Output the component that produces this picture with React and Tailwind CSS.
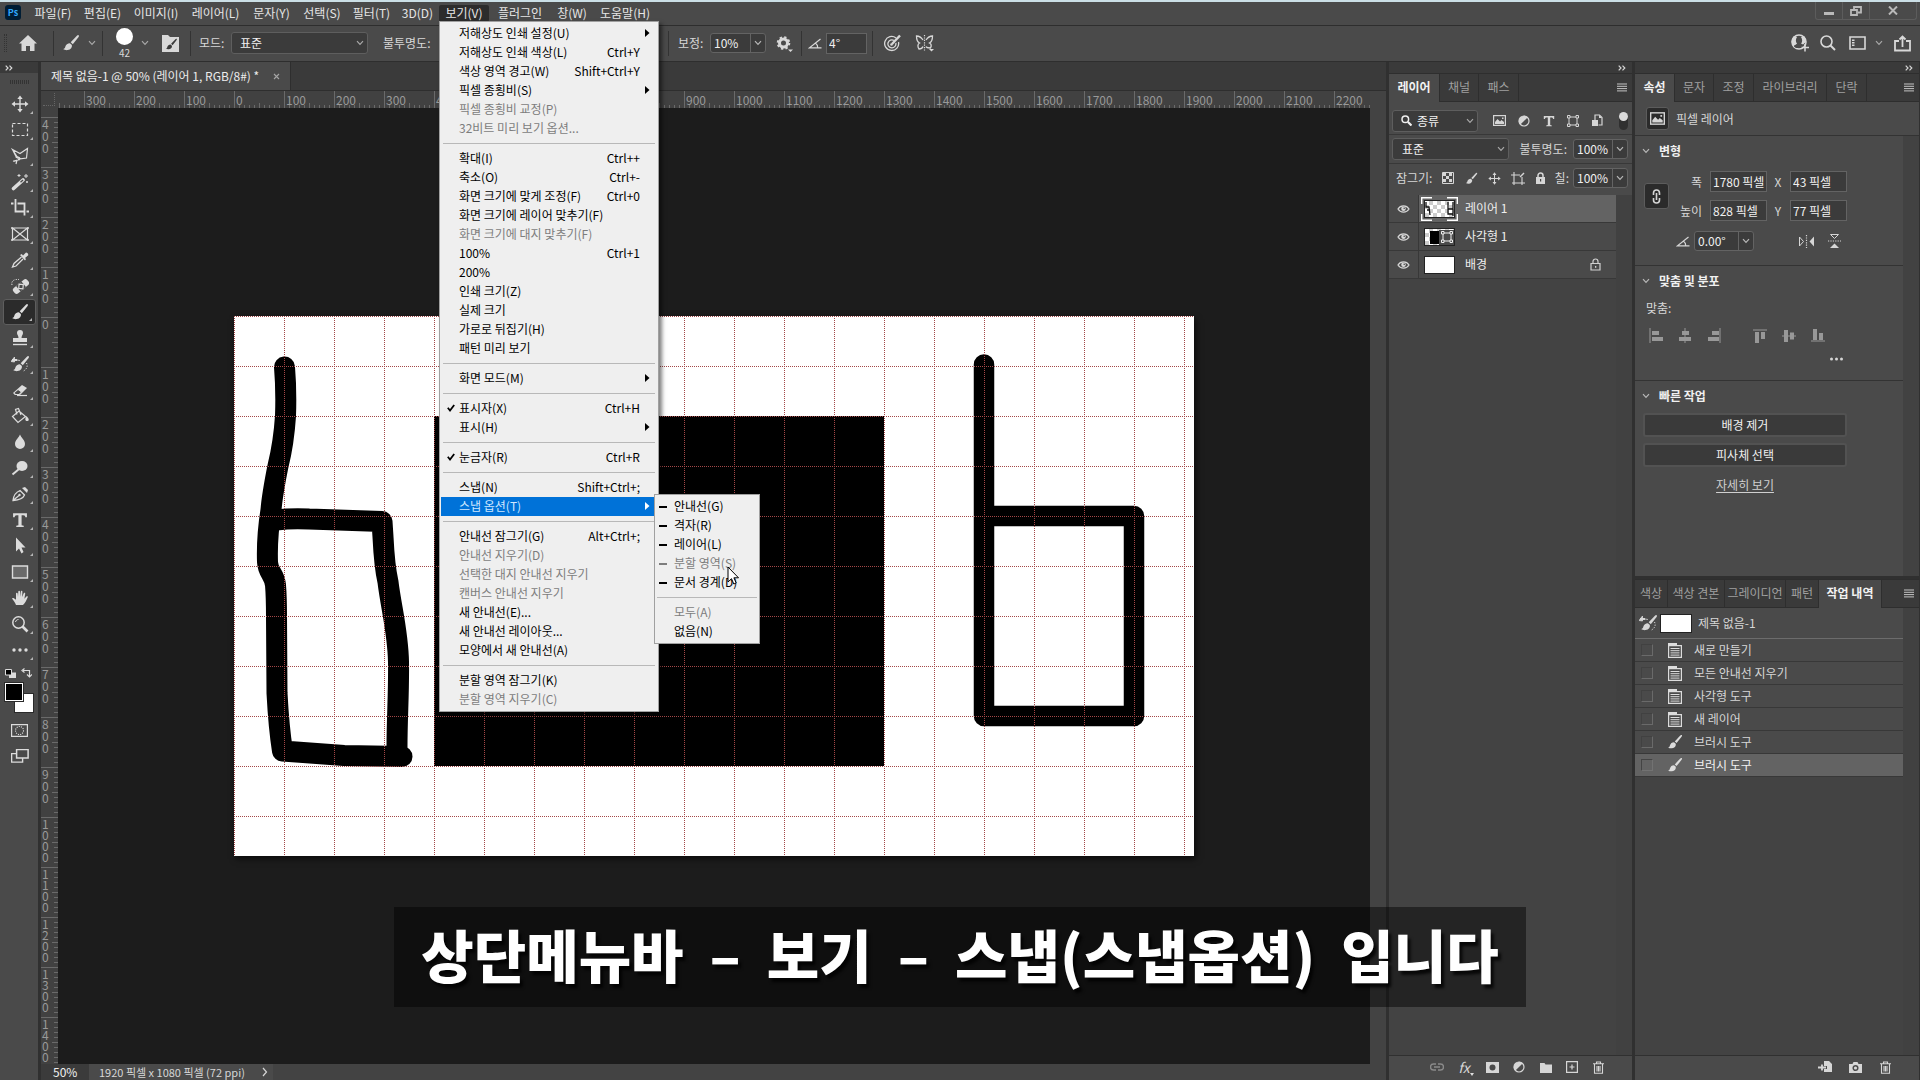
import React from "react";

const ui = "font-['Noto_Sans_CJK_KR','Noto_Sans',sans-serif]";

/* ---------- icons ---------- */

function Svg({ w = 18, h = 18, box, className = "", children }) {
  return (
    <svg
      width={w}
      height={h}
      viewBox={box || `0 0 ${w} ${h}`}
      fill="none"
      stroke="currentColor"
      strokeWidth="1.4"
      className={"shrink-0 " + className}
      aria-hidden="true"
    >
      {children}
    </svg>
  );
}

const Chevron = ({ className = "" }) => (
  <Svg w={8} h={6} className={className}>
    <path d="M1 1.2 4 4.4 7 1.2" strokeWidth="1.2" />
  </Svg>
);

const brushPath = (
  <g fill="currentColor" stroke="none">
    <path d="M16.6 1.2c.6.5.3 1.2-.2 2l-5.6 7-2.1-1.9 6.2-6.5c.6-.6 1.2-1 1.7-.6z" />
    <path d="M7.9 9.2l2 1.9c.4 2.3-1 4.7-4.2 5-1.7.2-3.4-.2-4.5-1 1.3-.2 1.7-.9 2.1-2.3.6-2.2 2.3-3.6 4.6-3.6z" />
  </g>
);
const Brush = ({ s = 18, className = "" }) => (
  <Svg w={s} h={s} box="0 0 18 18" className={className}>{brushPath}</Svg>
);
const Move = ({ s = 18 }) => (
  <Svg w={s} h={s} box="0 0 18 18">
    <path d="M9 2v14M2 9h14" />
    <path d="M9 .5 6.3 4h5.4zM9 17.5 6.3 14h5.4zM.5 9 4 6.3v5.4zM17.5 9 14 6.3v5.4z" fill="currentColor" stroke="none" />
  </Svg>
);
const HistoryBrush = () => (
  <Svg>
    <g transform="translate(1 0)">{brushPath}</g>
    <path d="M1 5h5" strokeWidth="2" />
    <path d="M6 5 9 5.5M0 6.5 3.5 2v5z" fill="currentColor" strokeWidth=".8" />
    <path d="M15.500 8c1.500 3 .5 6-3 8" strokeDasharray="1.2 1.5" strokeWidth="1" />
  </Svg>
);
const Angle = () => (
  <Svg w={14} h={11}>
    <path d="M12.5 1 1.5 9.8h12M7.500 5.200c1.600 1 2.200 2.500 2.200 4.500" strokeWidth="1.2" />
  </Svg>
);
const Trash = ({ s = 13 }) => (
  <Svg w={s} h={s} box="0 0 13 13">
    <path d="M1 2.700h11M4.500 2.500V1h4v1.500M2.500 3v9.300h8V3M5 5v5.500M6.500 5v5.500M8 5v5.500" strokeWidth="1.1" />
  </Svg>
);
const Menu3 = () => (
  <Svg w={10} h={9}><path d="M0 1h10M0 3.300h10M0 5.600h10M0 7.900h10" strokeWidth="1" /></Svg>
);
const Expand = () => (
  <Svg w={8} h={6}><path d="M.7.7 3 3 .7 5.3M4.5.7 6.800 3 4.500 5.300" strokeWidth="1.2" /></Svg>
);
const Picture = ({ w = 13, h = 11 }) => (
  <Svg w={w} h={h} box="0 0 13 11">
    <rect x=".6" y=".6" width="11.8" height="9.8" strokeWidth="1.2" />
    <path d="M2 9V7l2.500-3L7 6.500 8.500 5 11 7v2z" fill="currentColor" stroke="none" />
    <rect x="9" y="2.5" width="1.5" height="1.5" fill="currentColor" stroke="none" />
  </Svg>
);
const HalfCircle = () => (
  <Svg w={12} h={12}>
    <circle cx="6" cy="6" r="5" strokeWidth="1.2" />
    <path d="M9.800 2.200A5.400 5.400 0 0 0 2.200 9.800z" fill="currentColor" stroke="none" />
  </Svg>
);
const Transform = () => (
  <Svg w={12} h={12}>
    <path d="M2 2h8v8H2z" strokeWidth="1" />
    <path d="M.5.5h2.500v2.500H.5zM9 .5h2.500v2.500H9zM.5 9h2.500v2.500H.5zM9 9h2.500v2.500H9z" fill="#4a4a4a" strokeWidth="1" />
  </Svg>
);
const TypeT = ({ s = 12 }) => (
  <Svg w={s} h={s} box="0 0 12 12">
    <path d="M.8 1h10.400v3H10c0-1-.5-1.500-1.500-1.500H7.200V10l1.600.4v.8H3.200v-.8l1.600-.4V2.500H3.500C2.500 2.500 2 3 2 4H.8z" fill="currentColor" stroke="none" />
  </Svg>
);
const PadLock = () => (
  <Svg w={11} h={12}>
    <rect x="1" y="5" width="9" height="7" fill="currentColor" stroke="none" />
    <path d="M3 5V3.500a2.500 2.500 0 0 1 5 0V5" strokeWidth="1.5" />
    <rect x="5" y="7" width="1.2" height="2.5" fill="#444" stroke="none" />
  </Svg>
);
const Eye = () => (
  <Svg w={13} h={10}>
    <path d="M1 5c2.500-4.200 8.500-4.200 11 0-2.500 4.200-8.500 4.200-11 0z" strokeWidth="1.3" />
    <circle cx="6.5" cy="4.8" r="2.3" fill="currentColor" stroke="none" />
    <circle cx="7.2" cy="4.2" r=".8" fill="#4a4a4a" stroke="none" />
  </Svg>
);
const Doc = () => (
  <Svg w={14} h={15}>
    <path d="M0 0h9v3H0z" fill="currentColor" stroke="none" />
    <path d="M.6 2.600h12.800v11.800H.6z" strokeWidth="1.2" />
    <path d="M2.500 5.500h9M2.500 7.700h9M2.500 9.900h9M2.500 12.100h9" strokeWidth="1" />
  </Svg>
);

const toolIcons = [
  ["이동 도구", <Move />],
  ["사각형 선택 윤곽 도구", <Svg><path d="M1.500 2.500h15v12h-15z" strokeDasharray="3 2" strokeWidth="1.2" /></Svg>],
  ["올가미 도구", <Svg><path d="M1.500 2.500 9 6.500 16.500 1.500l-1 9.500-8 1z M1.500 2.500l4 8M5 11a2 1.500 0 1 1 2 2c-2 0-3 1.500-5 1M6 13l-1 4" strokeWidth="1.2" /></Svg>],
  ["마술봉 도구", <Svg><path d="M2.500 15.500 12 7" strokeWidth="3.6" strokeLinecap="round" /><path d="M9.500 9.200 12 7" stroke="#4a4a4a" strokeWidth="1.3" /><path d="M8 1v3M6.500 2.500h3M15 1v4M13 3h4M16 8v2M15 9h2" strokeWidth="1" /></Svg>],
  ["자르기 도구", <Svg><path d="M4.500 0v12.500h9M0 4.500h2.500M6.500 4.500h7v12M15.500 12.500H18" strokeWidth="1.8" /></Svg>],
  ["프레임 도구", <Svg><path d="M1.500 3h15v12h-15zM1.500 3l15 12M16.500 3l-15 12" strokeWidth="1.2" /><path d="M0 3h2M0 15h2M16 3h2M16 15h2" strokeWidth="1.5" /></Svg>],
  ["스포이드 도구", <Svg><path d="M10.500 6 3 12.500l-1.500 3.500 3.500-1L12 8" strokeWidth="1.3" /><path d="M9 4l5 5.500 1-1.500-1-1 3-2.500c.8-1-.2-3-2-3L12 4.500 10.800 3z" fill="currentColor" stroke="none" /></Svg>],
  ["복구 브러시 도구", <Svg><g transform="rotate(-40 10 9.5)"><rect x="1" y="6" width="18" height="7" rx="2.5" fill="currentColor" stroke="none" /><rect x="6.500" y="6" width="7" height="7" fill="#4a4a4a" stroke="none" /><path d="M7 9.500 10 6.500l3 3-3 3z" strokeWidth="1.2" /></g><path d="M1 8C0 4 3 2 8 2.500" strokeDasharray="1.2 1.3" strokeWidth="1" /></Svg>],
  ["브러시 도구", <Brush />],
  ["복제 도장 도구", <Svg><path d="M6 4a3 3 0 1 1 6 0c0 2-1.500 2.500-1.500 5H16v4H2V9h5.500C7.500 6.500 6 6 6 4z" fill="currentColor" stroke="none" /><path d="M2 15.500h14" /></Svg>],
  ["작업 내역 브러시 도구", <HistoryBrush />],
  ["지우개 도구", <Svg><path d="M2 12 11 4l5 3-7 7H4z" fill="currentColor" stroke="none" /><path d="M3.500 11.500 7 8.500l3.500 2.500-2.500 2.500H4z" fill="#4a4a4a" stroke="currentColor" strokeWidth="1" /><path d="M6 14.500h10" strokeWidth="1.2" /></Svg>],
  ["페인트 통 도구", <Svg><path d="M1.500 9.500 8 4l6.500 5.500L7 15.500zM6 7.500 4.500 2.500l3-1L10 8" strokeWidth="1.2" /><path d="M15 9c4 3 3 5 1 5s-2-2-1-5z" fill="currentColor" stroke="none" /></Svg>],
  ["흐림 효과 도구", <Svg><path d="M9 1.500c1 3 5 5.500 5 9.500a5 5 0 0 1-10 0c0-4 4-6.500 5-9.500z" fill="currentColor" stroke="none" /></Svg>],
  ["닷지 도구", <Svg><ellipse cx="11" cy="7" rx="5.5" ry="5" fill="currentColor" stroke="none" /><path d="M8 10 1.500 15.500" strokeWidth="2" /></Svg>],
  ["펜 도구", <Svg><path d="M2 15.500C2.500 11 4 7.500 9 5.500l4.500 4.500c-1.500 4-5.500 5-11.500 5.500zL8 10.500" strokeWidth="1.3" /><path d="m11 3 5 5 1-3-3-3z" fill="currentColor" stroke="none" /><circle cx="8.500" cy="10" r="1.2" fill="currentColor" stroke="none" /></Svg>],
  ["수평 문자 도구", <TypeT s={16} />],
  ["패스 선택 도구", <Svg><path d="M5 .5 14.500 10.500H10.500l2 4.500-2 1.500-2.500-5L5 14.500z" fill="currentColor" stroke="none" /></Svg>],
  ["사각형 도구", <Svg><path d="M1.500 3h15v12h-15z" fill="#6a6a6a" /></Svg>],
  ["손 도구", <Svg><path d="M5 16C4 13 2 11 1 9.500c.5-1 2-.5 4 1.200V4.500c0-1 1.500-1 1.700 0L7 8l.3-5.500c0-1 1.700-1 1.700 0V8l.8-5.500c.2-1 1.700-.8 1.600.2L11.200 8l1.500-3.800c.4-.9 1.700-.5 1.500.5l-.8 5 2-2.200c.9-.8 1.800-.1 1.300.8-1.500 3-2.200 5.500-4.700 7.700z" fill="currentColor" stroke="none" /></Svg>],
  ["돋보기 도구", <Svg><circle cx="7.500" cy="7.500" r="5.7" strokeWidth="1.5" /><path d="m11.500 11.500 5 5" strokeWidth="2.6" /><path d="M4.500 7c.3-1.500 1.500-2.500 3-2.500" strokeWidth="1" /></Svg>],
  ["도구 모음 편집", <Svg><g fill="currentColor" stroke="none"><circle cx="3" cy="9" r="1.700" /><circle cx="9" cy="9" r="1.700" /><circle cx="15" cy="9" r="1.700" /></g></Svg>],
];

/* ---------- menus ---------- */

const viewMenu = [
  ["저해상도 인쇄 설정(U)", "", "sub"],
  ["저해상도 인쇄 색상(L)", "Ctrl+Y"],
  ["색상 영역 경고(W)", "Shift+Ctrl+Y"],
  ["픽셀 종횡비(S)", "", "sub"],
  ["픽셀 종횡비 교정(P)", "", "off"],
  ["32비트 미리 보기 옵션...", "", "off"],
  null,
  ["확대(I)", "Ctrl++"],
  ["축소(O)", "Ctrl+-"],
  ["화면 크기에 맞게 조정(F)", "Ctrl+0"],
  ["화면 크기에 레이어 맞추기(F)"],
  ["화면 크기에 대지 맞추기(F)", "", "off"],
  ["100%", "Ctrl+1"],
  ["200%"],
  ["인쇄 크기(Z)"],
  ["실제 크기"],
  ["가로로 뒤집기(H)"],
  ["패턴 미리 보기"],
  null,
  ["화면 모드(M)", "", "sub"],
  null,
  ["표시자(X)", "Ctrl+H", "check"],
  ["표시(H)", "", "sub"],
  null,
  ["눈금자(R)", "Ctrl+R", "check"],
  null,
  ["스냅(N)", "Shift+Ctrl+;"],
  ["스냅 옵션(T)", "", "open"],
  null,
  ["안내선 잠그기(G)", "Alt+Ctrl+;"],
  ["안내선 지우기(D)", "", "off"],
  ["선택한 대지 안내선 지우기", "", "off"],
  ["캔버스 안내선 지우기", "", "off"],
  ["새 안내선(E)..."],
  ["새 안내선 레이아웃..."],
  ["모양에서 새 안내선(A)"],
  null,
  ["분할 영역 잠그기(K)"],
  ["분할 영역 지우기(C)", "", "off"],
];

const snapMenu = [
  ["안내선(G)", true],
  ["격자(R)", true],
  ["레이어(L)", true],
  ["분할 영역(S)", true, true],
  ["문서 경계(D)", true],
  null,
  ["모두(A)", false, true],
  ["없음(N)", false],
];

const Separator = () => (
  <div role="separator" className="flex h-[11px] items-center px-[2px]">
    <div className="h-px w-full bg-[#b8b8b8]" />
  </div>
);

function SnapMenu() {
  return (
    <div role="menu" className="absolute -top-[3px] left-[213px] z-20 w-[106px] border border-[#a0a0a0] bg-[#efefef] py-[2px]">
      {snapMenu.map((m, i) =>
        m === null ? (
          <Separator key={i} />
        ) : (
          <button key={i} role="menuitem" disabled={m[2]} className={"flex h-[19px] w-full items-center whitespace-nowrap pb-[1px] pl-1 text-left " + (m[2] ? "text-[#7d7d7d]" : "text-black")}>
            <span className={"mr-[7px] mt-[2px] h-[2px] w-2 " + (m[1] ? "bg-current" : "")} />
            {m[0]}
          </button>
        )
      )}
      <svg width="14" height="20" viewBox="0 0 14 20" className="absolute left-[72px] top-[71px]" aria-hidden="true">
        <path d="M1 1v15l3.500-3.300 2.300 5.300 2.400-1-2.300-5.200h4.600z" fill="#fff" stroke="#000" strokeWidth="1" />
      </svg>
    </div>
  );
}

function ViewMenu() {
  return (
    <div role="menu" className="absolute left-0 top-[19px] z-10 w-[220px] border border-[#a0a0a0] bg-[#efefef] px-[1px] py-[2px] shadow-[3px_3px_4px_rgba(0,0,0,0.5)]">
      {viewMenu.map((m, i) => {
        if (m === null) return <Separator key={i} />;
        const [label, keys, kind] = m;
        const open = kind === "open";
        return (
          <div key={i} className="relative">
            <button
              role="menuitem"
              disabled={kind === "off"}
              className={
                "flex h-[19px] w-full items-center whitespace-nowrap pb-[1px] text-left " +
                (open ? "bg-[#0072d8] text-[#cfe8ff]" : kind === "off" ? "text-[#7d7d7d]" : "text-black")
              }
            >
              <span className="flex w-[18px] justify-center pl-[1px]">
                {kind === "check" && (
                  <Svg w={8} h={8}><path d="M.8 3.800 3 6.500 7.200 1" strokeWidth="1.8" /></Svg>
                )}
              </span>
              <span>{label}</span>
              <span className="ml-auto pr-[17px]">{keys}</span>
              {(kind === "sub" || open) && (
                <svg width="5" height="8" className={"mr-[7px] " + (open ? "text-white" : "text-black")} aria-hidden="true">
                  <path d="M0 0 4.500 4 0 8z" fill="currentColor" />
                </svg>
              )}
            </button>
            {open && <SnapMenu />}
          </div>
        );
      })}
    </div>
  );
}

const menus = [
  ["파일(F)", "w-[50px]"],
  ["편집(E)", "w-[49px]"],
  ["이미지(I)", "w-[58px]"],
  ["레이어(L)", "w-[61px]"],
  ["문자(Y)", "w-[51px]"],
  ["선택(S)", "w-[50px]"],
  ["필터(T)", "w-[49px]"],
  ["3D(D)", "w-[43px]"],
  ["보기(V)", "w-[50px]"],
  ["플러그인", "w-[62px]"],
  ["창(W)", "w-[42px]"],
  ["도움말(H)", "w-[64px]"],
];

function MenuBar() {
  return (
    <header className="flex h-[24px] shrink-0 items-stretch border-b border-[#2e2e2e] bg-[#4a4a4a] text-[#e6e6e6]">
      <div className="ml-[5px] mr-[7px] mt-[3px] flex h-[15px] w-[16px] items-center justify-center rounded-[3px] bg-[#001d34] text-[9px] font-bold text-[#31a8ff]">Ps</div>
      <nav className="flex">
        {menus.map(([m, w]) => {
          const on = m === "보기(V)";
          return (
            <div key={m} className={"relative h-[21px] pt-[2px] " + w}>
              <button className={"h-[17px] w-full whitespace-nowrap rounded-[2px] pb-[2px] leading-[15px] " + (on ? "bg-[#2c2c2c]" : "")}>{m}</button>
              {on && <ViewMenu />}
            </div>
          );
        })}
      </nav>
      <div className="ml-auto mr-[3px] flex h-[18px] rounded-b-[3px] border border-t-0 border-[#5c5c5c] text-[#b9b9b9]">
        <button aria-label="최소화" className="flex w-[27px] items-center justify-center border-r border-[#5c5c5c]"><Svg w={10} h={10}><path d="M0 7.500h10" strokeWidth="3" /></Svg></button>
        <button aria-label="이전 크기로" className="flex w-[27px] items-center justify-center border-r border-[#5c5c5c]"><Svg w={12} h={10}><path d="M4 3V1h7v5.500H8M1 4h6v5H1z" strokeWidth="1.8" /></Svg></button>
        <button aria-label="닫기" className="flex w-[46px] items-center justify-center"><Svg w={10} h={9}><path d="m1 .5 8 8M9 .5l-8 8" strokeWidth="2" /></Svg></button>
      </div>
    </header>
  );
}

/* ---------- form controls ---------- */

function SelectBox({ label, value, className = "", pad = "pl-2", icon }) {
  return (
    <span className={"relative flex h-[22px] items-center rounded-[3px] border border-[#5e5e5e] bg-[#3b3b3b] text-[#f0f0f0] " + className}>
      {icon}
      <select aria-label={label} className={"h-full w-full appearance-none bg-transparent outline-none " + pad} defaultValue={value}>
        <option>{value}</option>
      </select>
      <Chevron className="pointer-events-none absolute right-[3px] text-[#a8a8a8]" />
    </span>
  );
}

function Combo({ label, value, className = "", inputClass = "" }) {
  return (
    <span className={"flex h-[20px] items-stretch rounded-[3px] border border-[#636363] bg-[#3b3b3b] text-[#f0f0f0] " + className}>
      <input aria-label={label} defaultValue={value} className={"min-w-0 flex-1 bg-transparent pb-[1px] pl-[3px] outline-none " + inputClass} />
      <button aria-label={label + " 목록"} className="flex w-[15px] items-center justify-center border-l border-[#636363] text-[#b8b8b8]"><Chevron /></button>
    </span>
  );
}

const Rule = ({ className = "" }) => <span className={"h-[25px] w-px shrink-0 bg-[#333] " + className} />;

function OptionsBar() {
  return (
    <div className="flex h-[36px] shrink-0 items-center border-b border-[#2e2e2e] bg-[#4a4a4a] pb-[1px] text-[#d8d8d8]">
      <div className="flex w-[231px] shrink-0 items-center">
        <span className="ml-[4px] h-[18px] w-[3px] border-x border-dotted border-[#333]" />
        <button aria-label="홈" className="ml-[12px]"><Svg w={18} h={17}><path d="M9 0 18 8.500h-2.500V16h-4.500v-5H7v5H2.500V8.500H0z" fill="currentColor" stroke="none" /></Svg></button>
        <Rule className="ml-[16px]" />
        <button aria-label="브러시" className="ml-[8px] flex items-center gap-[8px]"><Brush /><Chevron className="text-[#a8a8a8]" /></button>
        <Rule className="ml-[6px]" />
        <button aria-label="브러시 크기 42" className="ml-[13px] flex items-center gap-[8px]">
          <span className="flex flex-col items-center text-[10px] leading-[13px]"><span className="mb-[1px] block h-[17px] w-[17px] rounded-full bg-white" />42</span>
          <Chevron className="text-[#a8a8a8]" />
        </button>
        <button aria-label="브러시 설정" className="ml-[13px]"><Svg w={17} h={17}><path d="M0 0h6l2 2h9v15H0z" fill="currentColor" stroke="none" /><g className="text-[#3a3a3a]" transform="translate(3 3) scale(.7)">{brushPath}</g></Svg></button>
        <Rule className="ml-[11px]" />
        <span className="ml-[8px] whitespace-nowrap">모드:</span>
      </div>
      <SelectBox label="모드" value="표준" className="w-[137px]" />
      <span className="ml-[15px] w-[285px] shrink-0">불투명도:</span>
      <Rule />
      <span className="ml-[9px] w-[32px] shrink-0">보정:</span>
      <Combo label="보정" value="10%" className="w-[56px]" />
      <button aria-label="보정 옵션" className="ml-[10px]"><Svg w={17} h={17}><circle cx="7.500" cy="8" r="4" strokeWidth="3" /><circle cx="7.500" cy="8" r="5.800" strokeWidth="2" strokeDasharray="2.300 2.255" /><path d="M12 14.500h5l-2.500 2.500z" fill="currentColor" stroke="none" /></Svg></button>
      <Rule className="ml-[8px]" />
      <span className="ml-[6px] mr-[4px]"><Angle /></span>
      <input aria-label="각도" defaultValue="4°" className="h-[21px] w-[41px] border border-[#636363] bg-[#3b3b3b] pb-[1px] pl-[2px] text-[#f0f0f0] outline-none" />
      <Rule className="ml-[5px]" />
      <button aria-label="크기에 압력 사용" className="ml-[11px]"><Svg w={18} h={18}><path d="M12 4A7 7 0 1 0 14.500 8M10 6.500a4 4 0 1 0 1.800 2.500" strokeWidth="1.3" /><circle cx="7.500" cy="10.500" r="1.3" fill="currentColor" stroke="none" /><path d="m8 10 8-8.500" strokeWidth="2.4" /></Svg></button>
      <button aria-label="대칭 옵션" className="ml-[13px]"><Svg w={19} h={18}><path d="M8 6C6 3 4 2 1.500 2c0 4 1 6 3 7-2 1-2 4-.5 6 2 0 3.500-1 4-2.500M11 6c2-3 4-4 6.500-4 0 4-1 6-3 7 2 1 2 3 1 5-2 0-4 0-4.500-1.500" strokeWidth="1.3" /><path d="M9.500 1v16" strokeDasharray="1.2 1.2" strokeWidth="1.2" /><path d="M14 15h5l-2.500 2.500z" fill="currentColor" stroke="none" /></Svg></button>
      <div className="ml-auto mr-[9px] flex items-center">
        <button aria-label="공유 대상 초대"><Svg w={18} h={18}><circle cx="8" cy="8" r="7" strokeWidth="1.500" /><path d="M3 12.500c0-1.500 3-1.500 3-3C4.500 7 5 4 8 4s3.500 3 2 5.500c0 1 1.500 1 2 1.500l-1 3H5z" fill="#4a4a4a" stroke="none" /><path d="M2.500 12.500A7.500 7.500 0 0 1 3 2l3 1C4.500 5 4.500 8 6 9.500c0 1-2.500 1-3.500 3zM13 2a7.500 7.500 0 0 1 2 6l-3 2.500-2-1C11.500 8 11.500 5 10 3z" fill="currentColor" stroke="none" /><path d="M14 10v7.500M10.500 13.500H18" strokeWidth="1.5" /></Svg></button>
        <button aria-label="검색" className="ml-[11px]"><Svg w={16} h={16}><circle cx="6.500" cy="6.500" r="5.500" strokeWidth="1.6" /><path d="m10.500 10.500 4.500 4.500" strokeWidth="2" /></Svg></button>
        <button aria-label="작업 영역" className="ml-[13px] flex items-center gap-[9px]"><Svg w={17} h={14}><path d="M1 1h15v12H1z" strokeWidth="1.6" /><path d="M3 3.500h2.500v1.500H3zM3 6h2.500v1.500H3zM3 8.500h2.500V10H3z" fill="currentColor" stroke="none" /></Svg><Chevron className="text-[#a8a8a8]" /></button>
        <button aria-label="공유" className="ml-[11px]"><Svg w={17} h={17}><path d="M5 6H1v9.500h15V6h-4M8.500 12V2M5.500 4.500l3-3 3 3" strokeWidth="1.8" /></Svg></button>
      </div>
    </div>
  );
}

/* ---------- tool column ---------- */

const Corner = () => (
  <svg width="3" height="3" className="absolute bottom-[3px] right-[3px]" aria-hidden="true"><path d="M3 0v3H0z" fill="#b5b5b5" /></svg>
);

function ToolColumn() {
  return (
    <aside className="flex w-[41px] shrink-0 flex-col border-r-[3px] border-[#303030] bg-[#4a4a4a] text-[#dcdcdc]">
      <div className="flex h-[11px] shrink-0 items-center bg-[#3a3a3a] pl-[5px]"><Expand /></div>
      <div className="flex h-[18px] shrink-0 items-center pl-[10px]"><span className="h-[4px] w-[19px] bg-[repeating-linear-gradient(90deg,#333_0_1px,transparent_1px_2px)]" /></div>
      {toolIcons.map(([name, icon]) => (
        <button
          key={name}
          aria-label={name}
          className={"relative ml-[3px] flex h-[26px] w-[33px] shrink-0 items-center justify-center " + (name === "브러시 도구" ? "rounded-[3px] border border-[#5e5e5e] bg-[#2b2b2b]" : "")}
        >
          {icon}
          <Corner />
        </button>
      ))}
      <div className="flex h-[20px] shrink-0 items-center justify-between px-[5px]">
        <Svg w={11} h={9}><path d="M4 3.500h7V9H4z" fill="currentColor" stroke="none" /><path d="M.5.500h6v5.500h-6z" fill="#000" strokeWidth="1" /></Svg>
        <Svg w={11} h={10} className="mr-[1px]"><path d="M2 2.500h6.500V8M3.500.500l-2.500 2 2.500 2M6 6.500l2.500 2.500L11 6.500" strokeWidth="1.2" /></Svg>
      </div>
      <div className="relative ml-[4px] h-[30px] w-[30px] shrink-0">
        <button aria-label="배경색" className="absolute bottom-0 right-0 h-[20px] w-[20px] border border-[#2a2a2a] bg-white" />
        <button aria-label="전경색" className="absolute left-[1px] top-0 h-[18px] w-[18px] border border-white bg-black outline outline-1 outline-[#2a2a2a]" />
      </div>
      <button aria-label="빠른 마스크" className="ml-[11px] mt-[11px]"><Svg w={17} h={13}><path d="M.6.600h15.800v11.800H.6z" strokeWidth="1.2" /><circle cx="8.500" cy="6.500" r="4" strokeDasharray="1.1 1.1" strokeWidth="1.1" /></Svg></button>
      <button aria-label="화면 모드" className="relative ml-[11px] mt-[12px] w-[24px]"><Svg w={18} h={14}><path d="M.6 4.600h11v8.500H.6z" /><path d="M5.600.600h11.500v8.500H5.600z" fill="#4a4a4a" strokeWidth="1.5" /></Svg></button>
    </aside>
  );
}

/* ---------- document ---------- */

const hLabels = [];
for (let v = -300; v <= 2200; v += 100) hLabels.push(Math.abs(v));
const vLabels = [];
for (let v = -400; v <= 1400; v += 100) vLabels.push(Math.abs(v));

const hTicks = Array.from({ length: 9 }, (_, i) => (i + 1) * 5);

function Rulers() {
  return (
    <div className="flex h-[17px] shrink-0 overflow-hidden bg-[#414141] text-[#999]">
      <div className="w-[17px] shrink-0 bg-[#414141] p-[2px]"><div className="h-full w-[12px] border-b border-r border-dotted border-[#666]" /></div>
      <svg width="26" height="17" className="shrink-0" stroke="#6a6a6a" aria-hidden="true"><path d="M1.500 12v5M6.500 14v3M11.500 14v3M16.500 14v3M21.500 14v3" /></svg>
      {hLabels.map((l, i) => (
        <div key={i} className="relative h-[17px] w-[50px] shrink-0 border-l border-[#6a6a6a] pl-[1px] leading-[18px]">
          {l}
          <svg width="50" height="17" className="absolute -left-px top-0" stroke="#6a6a6a" aria-hidden="true">
            {hTicks.map((t) => <path key={t} d={`M${t}.5 ${t === 25 ? 12 : 14}v5`} />)}
          </svg>
        </div>
      ))}
    </div>
  );
}

function VRuler() {
  return (
    <div className="h-full w-[17px] shrink-0 overflow-hidden bg-[#414141] pt-[9px] text-[#999]">
      {vLabels.map((l, i) => (
        <div key={i} className="relative h-[50px] w-full border-t border-[#6a6a6a] pl-[1px]">
          {String(l).split("").map((d, j) => (
            <div key={j} className={l >= 1000 ? "h-[11px] leading-[11px]" : "h-[12px] leading-[12px]"}>{d}</div>
          ))}
          <svg width="17" height="50" className="absolute left-0 -top-px" stroke="#6a6a6a" aria-hidden="true">
            {hTicks.map((t) => <path key={t} d={`M${t === 25 ? 11 : 13} ${t}.5H17`} />)}
          </svg>
        </div>
      ))}
    </div>
  );
}

const gx = Array.from({ length: 20 }, (_, i) => i * 50 + 0.5);
const gy = Array.from({ length: 11 }, (_, i) => i * 50 + 0.5);

function Artboard() {
  return (
    <svg width="960" height="540" className="block shrink-0 bg-white shadow-[2px_3px_6px_rgba(0,0,0,0.6)]" role="img" aria-label="제목 없음-1">
      <rect x="200" y="100" width="450" height="350" fill="#000" />
      <g fill="none" stroke="#000" strokeWidth="21" strokeLinecap="round" strokeLinejoin="round">
        <g transform="translate(0 1)">
          <path d="M50.500 50 C52 68 52 85 51.500 99 C50 122 47 137 44 149 C41 164 38 180 37 193 C34 212 33 230 33.500 245 C34 256 40 256 41.500 268 C42.500 280 42.500 290 42.500 300 L43 376 C44 395 45 412 48.500 434 L110 438.500 L168 439.500" />
          <path d="M42 203 Q58 201 75 202 L148 204.500 L149 220 C150 240 151 252 154 265 C157 290 164 315 164.500 345 C165 375 163 400 163 430" />
        </g>
        <path d="M750 48.500V400H900V200H750" strokeWidth="20.5" />
      </g>
      <g stroke="#a34848" strokeWidth="1" strokeDasharray="1 1">
        {gx.map((x) => <path key={"x" + x} d={`M${x} 0V540`} />)}
        {gy.map((y) => <path key={"y" + y} d={`M0 ${y}H960`} />)}
      </g>
    </svg>
  );
}

function DocumentArea() {
  return (
    <main className="flex min-w-0 flex-1 flex-col bg-[#3a3a3a]">
      <div className="flex h-[29px] shrink-0 border-b border-[#2e2e2e] text-[#ececec]">
        <button className="flex w-[250px] items-center gap-[14px] whitespace-nowrap border-r border-[#2e2e2e] bg-[#4a4a4a] pb-[1px] pl-[10px]">
          제목 없음-1 @ 50% (레이어 1, RGB/8#) *
          <Svg w={7} h={7} className="mt-[2px] text-[#a5a5a5]"><path d="m1 1 5 5M6 1 1 6" strokeWidth="1.1" /></Svg>
        </button>
      </div>
      <div className="flex min-h-0 flex-1">
        <div className="flex min-w-0 flex-1 flex-col">
          <Rulers />
          <div className="flex min-h-0 flex-1">
            <VRuler />
            <div className="flex min-w-0 flex-1 items-center justify-center overflow-hidden bg-[#1c1c1c]"><Artboard /></div>
          </div>
        </div>
        <div className="w-[16px] shrink-0 bg-[#434343]" />
      </div>
      <footer className="flex h-[16px] shrink-0 items-stretch bg-[#434343] text-[#d6d6d6]">
        <span className="w-[48px] bg-[#3b3b3b] pl-[12px] leading-[15px] text-[#f0f0f0]">50%</span>
        <button className="flex items-center gap-[17px] whitespace-nowrap bg-[#4a4a4a] pl-[10px] pr-[5px] text-[11px] leading-[16px]">
          1920 픽셀 x 1080 픽셀 (72 ppi)
          <Svg w={6} h={10}><path d="m1 1 3.500 4L1 9" strokeWidth="1.2" /></Svg>
        </button>
      </footer>
    </main>
  );
}

/* ---------- panels ---------- */

function Tabs({ items }) {
  return (
    <div role="tablist" className="flex h-[29px] shrink-0 items-stretch border-t border-[#2e2e2e] bg-[#3a3a3a]">
      {items.map(([t, w, on]) => (
        <button key={t} role="tab" aria-selected={!!on} className={"overflow-hidden whitespace-nowrap border-r border-[#2e2e2e] pb-[2px] " + w + (on ? " bg-[#4a4a4a] font-bold text-[#f2f2f2]" : " border-b text-[#a0a0a0]")}>{t}</button>
      ))}
      <div className="flex flex-1 items-center justify-end border-b border-[#2e2e2e] pr-[5px] text-[#c4c4c4]"><button aria-label="패널 메뉴"><Menu3 /></button></div>
    </div>
  );
}

const PanelTop = () => (
  <div className="flex h-[11px] shrink-0 items-center justify-end bg-[#3a3a3a] pr-[6px] text-[#d6d6d6]"><Expand /></div>
);

const checker = "bg-white bg-[conic-gradient(#ccc_25%,#fff_0_50%,#ccc_0_75%,#fff_0)] bg-[length:8px_8px]";

function LayerRow({ name, thumb, on, locked }) {
  return (
    <li className="flex h-[28px] items-stretch border-b border-[#383838]">
      <button aria-label={name + " 표시"} className="flex w-[30px] shrink-0 items-center justify-center border-r border-[#383838] text-[#d6d6d6]"><Eye /></button>
      <div className={"flex min-w-0 flex-1 items-center pl-[2px] text-[#eee] " + (on ? "bg-[#636363]" : "")}>
        {thumb}
        <button className="ml-[8px] pb-[1px]">{name}</button>
        {locked && <span className="ml-auto mr-[15px] text-[#d0d0d0]"><Svg w={11} h={13}><path d="M1 5.500h9v6.500H1zM3 5V3.500a2.500 2.500 0 0 1 5 0V5" strokeWidth="1.2" /><rect x="5" y="8" width="1.3" height="1.8" fill="currentColor" stroke="none" /></Svg></span>}
      </div>
    </li>
  );
}

function LayersPanel() {
  return (
    <section className="flex w-[249px] shrink-0 flex-col border-x-[3px] border-[#303030] bg-[#4a4a4a] text-[#d6d6d6]">
      <PanelTop />
      <Tabs items={[["레이어", "w-[51px]", 1], ["채널", "w-[39px]"], ["패스", "w-[40px]"]]} />
      <div className="flex h-[33px] shrink-0 items-center border-b border-[#383838] pl-[3px] pr-[4px] pt-[5px]">
        <SelectBox label="종류" value="종류" className="w-[86px]" pad="pl-[5px]" icon={<Svg w={11} h={11} className="ml-[8px]"><circle cx="4.300" cy="4.300" r="3.3" strokeWidth="1.5" /><path d="m7 7 3.500 3.500" strokeWidth="2.2" /></Svg>} />
        <div className="ml-[15px] flex flex-1 items-center justify-between">
          <button aria-label="픽셀 레이어 필터"><Picture /></button>
          <button aria-label="조정 레이어 필터"><HalfCircle /></button>
          <button aria-label="문자 레이어 필터"><TypeT /></button>
          <button aria-label="모양 레이어 필터"><Transform /></button>
          <button aria-label="고급 개체 필터"><Svg w={11} h={13}><path d="M3 6V1h4.500L10 3.500V11H6.500" strokeWidth="1.2" /><path d="M0 6h6v6H0zM7 1v3h3z" fill="currentColor" stroke="none" /></Svg></button>
          <button aria-label="필터 켜기" className="ml-[4px] flex h-[18px] w-[9px] items-start rounded-full bg-[#303030]"><span className="block h-[9px] w-[9px] rounded-full bg-[#dcdcdc]" /></button>
        </div>
      </div>
      <div className="flex h-[29px] shrink-0 items-center border-b border-[#383838] pl-[3px] pr-[4px]">
        <SelectBox label="혼합 모드" value="표준" className="w-[117px]" pad="pl-[9px]" />
        <span className="ml-auto mr-[6px]">불투명도:</span>
        <Combo label="불투명도" value="100%" className="w-[55px]" />
      </div>
      <div className="flex h-[31px] shrink-0 items-center pb-[3px] pl-[7px] pr-[4px]">
        <span>잠그기:</span>
        <div className="ml-[10px] mr-[9px] flex flex-1 items-center justify-between">
          <button aria-label="투명 픽셀 잠그기"><Svg w={12} h={12}><path d="M.5.500h11v11H.5z" strokeWidth="1" /><path d="M1 1h3v3H1zM7 1h3v3H7zM4 4h3v3H4zM1 7h3v3H1zM7 7h3v3H7z" fill="currentColor" stroke="none" /></Svg></button>
          <button aria-label="이미지 픽셀 잠그기"><Brush s={13} /></button>
          <button aria-label="위치 잠그기"><Move s={13} /></button>
          <button aria-label="대지 잠그기"><Svg w={14} h={13}><path d="M3 0v13M0 3h9M11 5v8M1 11h13" strokeWidth="1.1" /><path d="m9 5 4-4" strokeWidth="1.5" /></Svg></button>
          <button aria-label="모두 잠그기"><PadLock /></button>
        </div>
        <span className="mr-[4px]">칠:</span>
        <Combo label="칠" value="100%" className="w-[55px]" />
      </div>
      <div className="flex min-h-0 flex-1">
        <ul className="min-w-0 flex-1 bg-[#434343] [&>li]:bg-[#4a4a4a]">
          <LayerRow name="레이어 1" on thumb={
            <svg width="37" height="24" className="-mr-[1px]" aria-hidden="true">
              <foreignObject x="3" y="3" width="31" height="18"><div className={"h-full w-full border border-[#222] " + checker} /></foreignObject>
              <path d="M5 5v5h3l1 8M6 13h3M32 5v14M27 5v12h5M27 12h5" fill="none" stroke="#111" strokeWidth="1.3" />
              <path d="M.7 7V.7H11M26 .7h10.300V7M.7 17v6.300H11M26 23.300h10.300V17" fill="none" stroke="#fff" strokeWidth="1.4" />
            </svg>} />
          <LayerRow name="사각형 1" thumb={
            <span className={"relative ml-[3px] mr-[2px] block h-[18px] w-[31px] border border-[#222] " + checker}>
              <span className="absolute left-[5px] top-[2px] h-[13px] w-[12px] bg-black" />
              <span className="absolute bottom-0 right-0 flex h-[15px] w-[15px] items-center justify-center bg-[#4a4a4a]"><Transform /></span>
            </span>} />
          <LayerRow name="배경" locked thumb={<span className="ml-[3px] mr-[2px] block h-[18px] w-[31px] border border-[#222] bg-white" />} />
        </ul>
        <div className="w-[16px] shrink-0 bg-[#414141]" />
      </div>
      <div className="flex h-[25px] shrink-0 items-center justify-between border-t border-[#303030] pb-[2px] pl-[41px] pr-[27px]">
        <button aria-label="레이어 연결" className="text-[#8a8a8a]"><Svg w={14} h={8}><path d="M6 1H3.500a2.800 2.800 0 0 0 0 6H6M8 1h2.500a2.800 2.800 0 0 1 0 6H8M4 4h6" strokeWidth="1.4" /></Svg></button>
        <button aria-label="레이어 스타일" className="flex w-[14px] items-end text-[14px] italic leading-[18px]">fx<svg width="4" height="3" className="shrink-0" aria-hidden="true"><path d="M0 0h4L2 3z" fill="#ddd" /></svg></button>
        <button aria-label="마스크 추가"><Svg w={13} h={11}><path d="M0 0h13v11H0z" fill="currentColor" stroke="none" /><circle cx="6.500" cy="5.500" r="3" fill="#4a4a4a" stroke="none" /></Svg></button>
        <button aria-label="조정 레이어"><HalfCircle /></button>
        <button aria-label="새 그룹"><Svg w={12} h={11}><path d="M0 1h4.500l1 1.500H12V11H0z" fill="currentColor" stroke="none" /></Svg></button>
        <button aria-label="새 레이어"><Svg w={12} h={12}><path d="M.6.6h10.800v10.800H.6zM6 3.500v5M3.500 6h5" strokeWidth="1.2" /></Svg></button>
        <button aria-label="레이어 삭제"><Trash /></button>
      </div>
    </section>
  );
}

function SectionTitle({ children }) {
  return (
    <h3 className="flex h-[30px] items-center gap-[9px] pb-[1px] pl-[7px] font-bold text-[#f0f0f0]">
      <Chevron className="text-[#b8b8b8]" />
      {children}
    </h3>
  );
}

function NumberField({ label, value, labelClass }) {
  return (
    <label className="flex items-center">
      <span className={labelClass}>{label}</span>
      <input defaultValue={value} className="h-[21px] w-[57px] border border-[#636363] bg-[#3b3b3b] pb-[1px] pl-[2px] text-[#f0f0f0] outline-none" />
    </label>
  );
}

const aligns = [
  ["왼쪽 맞춤", "M1 0v15", "M3 3h7v4H3zM3 9h11v4H3z"],
  ["수평 가운데 맞춤", "M7 0v15", "M4 3h7v4H4zM1 9h12v4H1z"],
  ["오른쪽 맞춤", "M13 0v15", "M5 3h7v4H5zM1 9h11v4H1z"],
  ["위쪽 맞춤", "M0 2h14", "M2 4h4v11H2zM8 4h4v7H8z"],
  ["수직 가운데 맞춤", "M0 8h14", "M2 2h4v12H2zM8 4.500h4v7H8z"],
  ["아래쪽 맞춤", "M0 13h14", "M2 1h4v11H2zM8 5h4v7H8z"],
];

function Properties() {
  return (
    <div className="flex flex-col">
      <Tabs items={[["속성", "w-[40px]", 1], ["문자", "w-[39px]"], ["조정", "w-[40px]"], ["라이브러리", "w-[73px]"], ["단락", "w-[40px]"]]} />
      <div className="flex h-[34px] items-center border-b border-[#333] pl-[11px]">
        <span className="flex h-[23px] w-[23px] items-center justify-center rounded-[3px] border border-[#5c5c5c] bg-[#2b2b2b]"><Picture w={15} h={13} /></span>
        <span className="ml-[7px]">픽셀 레이어</span>
      </div>
      <div className="flex">
        <div className="min-w-0 flex-1">
          <div className="h-[130px] border-b border-[#333]">
            <SectionTitle>변형</SectionTitle>
            <div className="flex pt-[5px]">
              <button aria-label="폭 및 높이 연결" className="ml-[9px] mt-[12px] flex h-[26px] w-[25px] items-center justify-center rounded-[3px] border border-[#5c5c5c] bg-[#2b2b2b]"><Svg w={9} h={15}><path d="M1.500 6V4a3 3 0 0 1 6 0v2M1.500 9v2a3 3 0 0 0 6 0V9M4.500 4v7" strokeWidth="1.6" /></Svg></button>
              <div className="flex flex-col gap-[8px]">
                <div className="flex"><NumberField label="폭" value="1780 픽셀" labelClass="w-[41px] pr-[8px] text-right" /><NumberField label="X" value="43 픽셀" labelClass="w-[23px] pr-[4px] text-center pl-[3px]" /></div>
                <div className="flex"><NumberField label="높이" value="828 픽셀" labelClass="w-[41px] pr-[8px] text-right" /><NumberField label="Y" value="77 픽셀" labelClass="w-[23px] pr-[4px] text-center pl-[3px]" /></div>
              </div>
            </div>
            <div className="mt-[10px] flex items-center pl-[41px]">
              <Angle />
              <Combo label="각도" value="0.00°" className="ml-[4px] w-[60px]" />
              <button aria-label="수평 뒤집기" className="ml-[44px]"><Svg w={17} h={13}><path d="M1.500 2v9l4-4.500z" strokeWidth="1" /><path d="M8.500 0v13" strokeWidth="1.2" strokeDasharray="1.2 1.2" /><path d="M16 1.500v10L11.500 6.500z" fill="currentColor" stroke="none" /></Svg></button>
              <button aria-label="수직 뒤집기" className="ml-[13px]"><Svg w={13} h={16}><path d="M2.500 1.500h8l-4 4z" strokeWidth="1" /><path d="M0 8h13" strokeDasharray="1.2 1.2" strokeWidth="1.2" /><path d="M2 15h9L6.500 10.500z" fill="currentColor" stroke="none" /></Svg></button>
            </div>
          </div>
          <div className="h-[115px] border-b border-[#333]">
            <SectionTitle>맞춤 및 분포</SectionTitle>
            <div className="pl-[11px] pt-[3px] leading-[18px]">맞춤:</div>
            <div className="flex gap-[15px] pl-[14px] pt-[11px] text-[#989898]">
              {aligns.map(([n, line, bars], i) => (
                <button key={n} aria-label={n} className={i === 3 ? "ml-[17px]" : ""}><Svg w={14} h={15}><path d={line} strokeWidth="1" /><path d={bars} fill="currentColor" stroke="none" /></Svg></button>
              ))}
            </div>
            <button aria-label="추가 옵션" className="ml-[195px] mt-[14px] block"><Svg w={13} h={4}><g fill="currentColor" stroke="none"><circle cx="1.500" cy="2" r="1.5" /><circle cx="6.500" cy="2" r="1.5" /><circle cx="11.500" cy="2" r="1.5" /></g></Svg></button>
          </div>
          <div className="h-[195px]">
            <SectionTitle>빠른 작업</SectionTitle>
            <div className="flex w-[212px] flex-col gap-[6px] pl-[8px] pt-[2px] text-[#f0f0f0]">
              <button className="h-[24px] rounded-[3px] border-2 border-[#525252] bg-[#3a3a3a] leading-[18px]">배경 제거</button>
              <button className="h-[24px] rounded-[3px] border-2 border-[#525252] bg-[#3a3a3a] leading-[18px]">피사체 선택</button>
              <a href="#more" className="mt-[3px] self-center text-[#d0d0d0] underline underline-offset-2">자세히 보기</a>
            </div>
          </div>
        </div>
        <div className="w-[16px] shrink-0 bg-[#424242]" />
      </div>
    </div>
  );
}

const history = [
  ["새로 만들기"],
  ["모든 안내선 지우기"],
  ["사각형 도구"],
  ["새 레이어"],
  ["브러시 도구", "brush"],
  ["브러시 도구", "brush", true],
];

function History() {
  return (
    <div className="flex min-h-0 flex-1 flex-col border-t-[3px] border-[#303030]">
      <Tabs items={[["색상", "w-[33px]"], ["색상 견본", "w-[57px]"], ["그레이디언", "w-[61px]"], ["패턴", "w-[33px]"], ["작업 내역", "w-[63px]", 1]]} />
      <div className="flex min-h-0 flex-1">
        <div className="min-w-0 flex-1 bg-[#434343]">
          <div className="flex h-[31px] items-center border-b border-[#6c6c6c] bg-[#4a4a4a] pl-[4px]">
            <HistoryBrush />
            <span className="ml-[3px] h-[19px] w-[32px] border border-[#222] bg-white" />
            <span className="ml-[6px] pb-[1px]">제목 없음-1</span>
          </div>
          <ol>
            {history.map(([name, kind, on], i) => (
              <li key={i} className={"flex h-[23px] items-center border-b border-[#383838] pl-[6px] " + (on ? "bg-[#636363] text-[#f2f2f2]" : "bg-[#4a4a4a]")}>
                <button aria-label={name + " 원본 설정"} className={"h-[12px] w-[12px] border " + (on ? "border-b-[#727272] border-l-[#444] border-r-[#727272] border-t-[#444]" : "border-b-[#6a6a6a] border-l-[#414141] border-r-[#6a6a6a] border-t-[#414141]")} />
                <span className="ml-[14px] flex w-[15px] justify-center text-[#dcdcdc]">{kind ? <Brush s={16} /> : <Doc />}</span>
                <button className="ml-[12px] pb-[1px]">{name}</button>
              </li>
            ))}
          </ol>
        </div>
        <div className="w-[16px] shrink-0 bg-[#414141]" />
      </div>
      <div className="flex h-[25px] shrink-0 items-center justify-end gap-[17px] border-t border-[#303030] pb-[2px] pr-[27px]">
        <button aria-label="새 문서"><Svg w={14} h={12}><path d="M6 0h5l3 3v8H6V8h3V5H6z" fill="currentColor" stroke="none" /><path d="M4 3.500v6M0 6.500h8" strokeWidth="1.8" /></Svg></button>
        <button aria-label="새 스냅숏"><Svg w={13} h={11}><path d="M0 2h3.500l1-2h4l1 2H13v9H0z" fill="currentColor" stroke="none" /><circle cx="6.500" cy="6" r="2.3" stroke="#4a4a4a" strokeWidth="1.5" /></Svg></button>
        <button aria-label="삭제"><Trash /></button>
      </div>
    </div>
  );
}

export default function App() {
  return (
    <div className={"relative flex h-screen w-full flex-col overflow-hidden bg-[#4a4a4a] text-[12px] leading-[18px] " + ui}>
      <div className="h-[2px] shrink-0 bg-[#cbdfe6]" />
      <MenuBar />
      <OptionsBar />
      <div className="flex min-h-0 flex-1">
        <ToolColumn />
        <DocumentArea />
        <LayersPanel />
        <section className="flex w-[285px] shrink-0 flex-col border-r border-[#303030] bg-[#4a4a4a] text-[#d6d6d6]">
          <PanelTop />
          <Properties />
          <History />
        </section>
      </div>
      <div className="absolute bottom-[73px] left-1/2 flex h-[100px] w-[1132px] -translate-x-1/2 items-center justify-center gap-[26px] whitespace-nowrap bg-black/45 pb-[8px] text-[57px] font-black text-white [text-shadow:3px_4px_3px_rgba(0,0,0,0.8)]">
        <span>상단메뉴바</span>
        <span>–</span>
        <span>보기</span>
        <span>–</span>
        <span>스냅(스냅옵션)</span>
        <span>입니다</span>
      </div>
    </div>
  );
}
